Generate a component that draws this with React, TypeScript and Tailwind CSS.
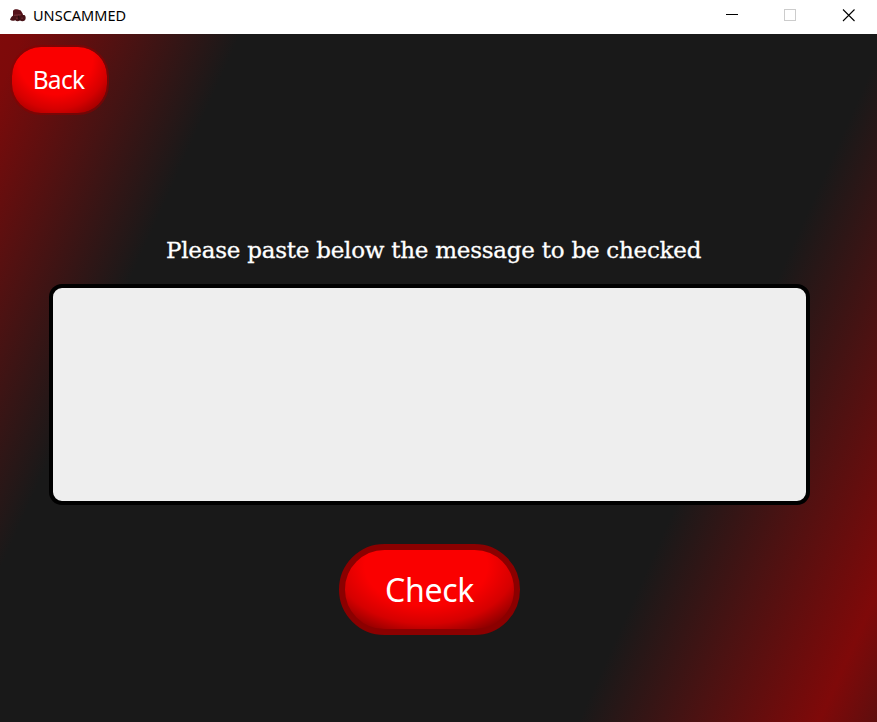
function HatLogo() {
  return (
    <svg className="h-[13px] w-4" viewBox="0 0 16 13">
      <path d="M3 1.8 C4.4 0 6.4 0 8 0.6 L10.8 1.4 L13 5.2 L12.6 7 H3 Z" fill="#54121a" />
      <path d="M0 10.8 C0.8 8 2.4 6.4 5 6 L14.4 6 C16 7.2 16 9.8 15 11.2 C13 12.6 11.4 12.2 10 11.4 C8 12.6 6.6 12.4 5.2 11.2 C3.4 12 1.4 12 0 10.8 Z" fill="#481318" />
      <path d="M4 6.3 L11 5.8 M6.2 9.2 H7.6 M11.4 9.2 H12.8" stroke="#8a4046" strokeWidth="0.8" />
      <path d="M8.6 6.8 L9.2 11" stroke="#22080b" strokeWidth="1" />
    </svg>
  );
}

function TitleBar() {
  return (
    <header className="flex h-[34px] shrink-0 items-start bg-white text-black">
      <div className="flex h-[30px] items-center pl-[10px]">
        <HatLogo />
        <h1 className="pl-[7px] font-['Noto_Sans',sans-serif] text-[14.5px] leading-5 tracking-[0.02px] whitespace-nowrap">
          UNSCAMMED
        </h1>
      </div>
      <div className="ml-auto flex h-[30px] items-center">
        <svg className="w-[58px]" height="30" viewBox="0 0 58 30">
          <path d="M23 14.5 H35" stroke="#000" shapeRendering="crispEdges" />
        </svg>
        <svg className="w-[58px]" height="30" viewBox="0 0 58 30">
          <rect x="23.5" y="9.5" width="11" height="11" fill="none" stroke="#cccccc" shapeRendering="crispEdges" />
        </svg>
        <svg className="w-[58px]" height="30" viewBox="0 0 58 30">
          <path d="M24 9.5 L35.5 21 M35.5 9.5 L24 21" stroke="#000" strokeWidth="1.1" />
        </svg>
      </div>
    </header>
  );
}

export default function App() {
  return (
    <div className="flex h-[722px] w-[877px] flex-col overflow-hidden">
      <TitleBar />
      <main className="flex flex-1 flex-col bg-[linear-gradient(114.2deg,#7f0a0a_0%,#7d0a0a_2%,#4c1212_11%,#191919_20.3%,#191919_74.8%,#4b1212_84.5%,#7f0909_95.1%,#5f0e0e_100%)]">
        <button className="mt-[11px] ml-[10px] flex h-[70px] w-[99px] items-center justify-center rounded-[31px] border-2 border-[#8b0000]/60 bg-[radial-gradient(ellipse_68%_92%_at_46%_20%,#fa0000_0%,#fa0000_55%,#d50000_78%,#980000_100%)] bg-clip-padding bg-origin-border pr-0.5 font-['Noto_Sans',sans-serif] text-[24.5px] leading-none tracking-[-0.7px] text-white">
          <span>Back</span>
        </button>
        <p className="mt-[118px] ml-[166px] h-[34px] font-['DejaVu_Serif',serif] text-[23px] leading-[34px] tracking-[-0.24px] whitespace-nowrap text-white [-webkit-text-stroke:0.3px_white]">
          Please paste below the message to be checked
        </p>
        <textarea
          className="mt-[17px] ml-[49px] h-[221px] w-[761px] shrink-0 resize-none rounded-[13px] border-4 border-black bg-[#eeeeee] outline-none"
          aria-label="Message"
        />
        <button className="mt-[39px] ml-[339px] flex h-[91px] w-[181px] items-center justify-center rounded-[46px] border-6 border-[#8b0000] bg-[radial-gradient(ellipse_66%_92%_at_48%_20%,#fa0000_0%,#fa0000_55%,#d50000_80%,#900000_100%)] font-['Noto_Sans',sans-serif] text-[32px] leading-none tracking-[-0.3px] text-white">
          <span>Check</span>
        </button>
      </main>
    </div>
  );
}
